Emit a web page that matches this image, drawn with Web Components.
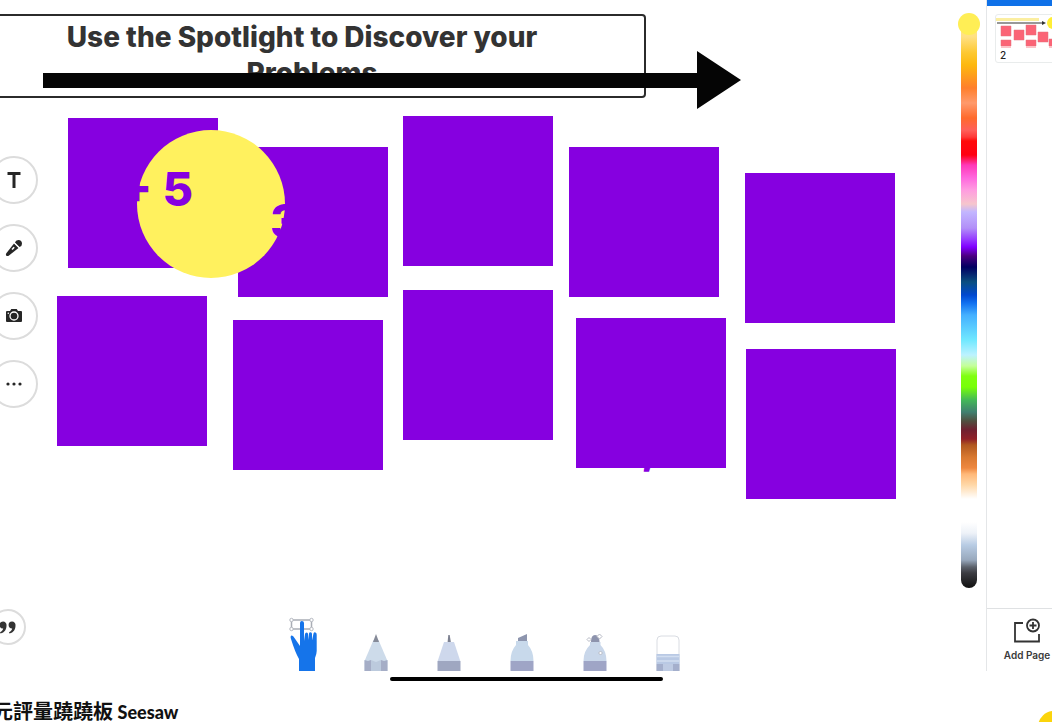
<!DOCTYPE html>
<html lang="zh-Hant">
<head>
<meta charset="utf-8">
<meta name="viewport" content="width=device-width, initial-scale=1">
<title>元評量蹺蹺板 Seesaw</title>
<style>
  html, body { margin: 0; height: 100%; }
  body { background: #fff; color: #222; font-family: Inter, "Noto Sans CJK TC", sans-serif; overflow: hidden; }
</style>
</head>
<body>
<seesaw-app></seesaw-app>
<script>
const define = (name, html, setup) => {
  const tpl = document.createElement('template');
  tpl.innerHTML = html;
  customElements.define(name, class extends HTMLElement {
    constructor() {
      super();
      this.attachShadow({ mode: 'open' }).append(tpl.content.cloneNode(true));
    }
    connectedCallback() { if (setup) setup(this, this.shadowRoot); }
  });
};

/* Round button of the left rail */
define('round-tool', `
<style>
  :host { display: block; }
  button { display: grid; place-items: center; box-sizing: border-box; width: var(--size, 48px); height: var(--size, 48px);
    padding: 0; border: 2px solid #dcdcdc; border-radius: 50%; background: #fff; color: #262626;
    font: 700 24px/24px Inter, sans-serif; }
</style>
<button type="button"><slot></slot></button>`,
(el, root) => root.querySelector('button').setAttribute('aria-label', el.getAttribute('label')));

define('tool-rail', `
<style>
  :host { display: flex; flex-direction: column; gap: 20px; margin-left: -10px; padding: 156px 0 26px; }
  .quote { --size: 36px; margin-top: auto; }
  svg { display: block; }
</style>
<round-tool label="Text"><svg width="16" height="18" viewBox="0 0 16 18"><path d="M1.500 1H14.500V4H9.500V17H6.500V4H1.500Z" fill="#262626"/></svg></round-tool>
<round-tool label="Record"><svg width="18" height="18" viewBox="0 0 18 18"><path d="M9 4.500 13.500 9 4 16.500Q2.500 17.600 1.300 16.700Q.4 15.500 1.500 14Z" fill="#262626"/><path d="M10 3.500Q10.500 1 13.300 1Q17 1.200 17 4.700Q17 7.500 14.500 8Z" fill="#262626"/><path d="M9.200 3.700 14.300 8.800" stroke="#fff" stroke-width="1"/><path d="M7 10.500 9.200 8.300" stroke="#fff" stroke-width="1.600"/></svg></round-tool>
<round-tool label="Photo"><svg width="18" height="16" viewBox="0 0 18 16"><path d="M2 3H5L6.300 1H11.700L13 3H16Q17 3 17 4V13Q17 14 16 14H2Q1 14 1 13V4Q1 3 2 3Z" fill="#262626"/><circle cx="9" cy="8" r="4" fill="none" stroke="#fff" stroke-width="1.300"/><circle cx="3.300" cy="5.200" r=".8" fill="#fff"/></svg></round-tool>
<round-tool label="More"><svg width="18" height="6" viewBox="0 0 18 6"><g fill="#262626"><circle cx="3" cy="3" r="1.600"/><circle cx="9" cy="3" r="1.600"/><circle cx="15" cy="3" r="1.600"/></g></svg></round-tool>
<round-tool class="quote" label="Caption"><svg width="18" height="13" viewBox="0 0 18 13"><g fill="#333"><path d="M4 .5A3.500 3.500 0 0 1 7.500 4.500C7.500 8.500 5.500 11.500 1.500 12.500L1 11.300C3 10.300 4 9 4.200 7.500A3.500 3.500 0 1 1 4 .5Z"/><path d="M13 .5A3.500 3.500 0 0 1 16.500 4.500C16.500 8.500 14.500 11.500 10.500 12.500L10 11.300C12 10.300 13 9 13.200 7.500A3.500 3.500 0 1 1 13 .5Z"/></g></svg></round-tool>`);

/* Free canvas: every object is placed by its own x and y */
define('canvas-item', `<style>:host { display: block; position: absolute; }</style><slot></slot>`,
(el) => {
  el.style.left = el.getAttribute('x') + 'px';
  el.style.top = el.getAttribute('y') + 'px';
});

define('drawing-canvas', `
<style>
  :host { display: block; position: absolute; inset: 0; overflow: hidden; }
  h1 { box-sizing: border-box; width: 688px; height: 84px; margin: 0; padding: 3px 80px; border: 2px solid #2b2b2b; border-radius: 4px;
    color: #333; text-align: center; font: 800 28px/36px Inter, sans-serif; overflow: hidden; }
  h1 span { padding-left: 20px; }
  .card { width: 150px; height: 150px; background: #8600e0; }
  .spot { width: 148px; height: 148px; border-radius: 50%; background: #fff15e; }
  .num { color: #8600e0; font: 800 47px/48px Inter, sans-serif; white-space: pre; }
  svg { display: block; }
</style>
<canvas-item x="-42" y="14"><h1>Use the Spotlight to Discover your <span>Problems</span></h1></canvas-item>
<canvas-item x="43" y="51"><svg width="700" height="60"><path d="M0 22H654V0L698 29 654 58V37H0Z" fill="#050505"/></svg></canvas-item>
<div id="cards"></div>
<canvas-item x="137" y="130"><div class="spot"></div></canvas-item>
<canvas-item x="120" y="165"><div class="num">+ 5</div></canvas-item>
<canvas-item x="270" y="197"><div class="num">3</div></canvas-item>
<canvas-item x="641" y="421"><div class="num">,</div></canvas-item>`,
(el, root) => {
  const places = [[68,118],[238,147],[403,116],[569,147],[745,173],[57,296],[233,320],[403,290],[576,318],[746,349]];
  root.querySelector('#cards').innerHTML = places
    .map(([x, y]) => `<canvas-item x="${x}" y="${y}"><div class="card"></div></canvas-item>`).join('');
});

/* Vertical colour picker */
define('colour-slider', `
<style>
  :host { display: flex; padding: 13px 6px 83px 0; }
  input { appearance: none; writing-mode: vertical-lr; width: 22px; height: 100%; margin: 0; background: none; }
  input::-webkit-slider-runnable-track { appearance: none; width: 16px; height: 100%; border-radius: 8px; background: var(--ramp); }
  input::-webkit-slider-thumb { appearance: none; width: 22px; height: 22px; margin-left: -3px; border-radius: 50%; background: #ffee55; }
</style>
<input type="range" min="0" max="100" value="0" aria-label="Colour">`,
(el, root) => {
  const stops = [[0,'transparent'],[10,'transparent'],[11,'#ffe88a'],[24,'#ffe082'],[40,'#fdc830'],[52,'#fdb80f'],[75,'#ff7f2c'],[90,'#ff9a6c'],[105,'#ff6a2c'],
    [117,'#ff605a'],[124,'#ff3a38'],[128,'#ff0a0a'],[142,'#ff0012'],[152,'#ff38b8'],[165,'#ff68de'],[177,'#ff9ce0'],[191,'#f6c6cc'],[199,'#c2b6ff'],
    [215,'#b28ff8'],[227,'#9436ff'],[234,'#8000ff'],[243,'#4c0080'],[254,'#020062'],[269,'#0a4f80'],[282,'#0048d0'],[290,'#1070f0'],
    [302,'#44b0ff'],[327,'#70e8ff'],[342,'#bcf2ff'],[353,'#c4ff98'],[363,'#80ff10'],[374,'#78ff08'],[387,'#44b858'],[399,'#408070'],[408,'#505040'],
    [417,'#702030'],[426,'#902028'],[432,'#b05820'],[444,'#d87830'],[455,'#ee8840'],[461,'#ffb878'],[472,'#ffd8a8'],[486,'#ffffff'],
    [509,'#ffffff'],[520,'#eef2f8'],[532,'#b8cce4'],[547,'#98a8bc'],[554,'#5c626c'],[560,'#3c3c42'],[575,'#101010']];
  el.style.setProperty('--ramp', 'linear-gradient(' + stops.map(([p, c]) => `${c} ${p / 5.75}%`).join(',') + ')');
});

define('pen-tray', `
<style>
  :host { display: flex; justify-content: center; align-items: flex-end; padding-right: 16px; }
  button { display: flex; justify-content: center; align-items: flex-end; width: 73px; height: 60px; padding: 0; border: 0; background: none; }
  svg { display: block; }
</style>
<button type="button" aria-label="Select"><svg width="30" height="54" viewBox="0 0 30 54">
  <rect x="3.500" y="3" width="20" height="9" fill="#fff" stroke="#a9adb5" stroke-width="1.500"/>
  <g fill="#fff" stroke="#b4b8c0"><circle cx="3.500" cy="3" r="1.700"/><circle cx="23.500" cy="3" r="1.700"/><circle cx="3.500" cy="12" r="1.700"/><circle cx="23.500" cy="12" r="1.700"/></g>
  <path d="M12 6Q12 4 13.800 4Q16 4 16 6V24L17 17Q17.200 15.500 18.700 15.500Q20 15.500 20 17V23L21 16.500Q21.300 15 22.600 15.200Q24 15.400 24 17V23.500L25.500 16.500Q26 15 27.500 15.400Q29 16 28.700 18V34Q28.700 37 27 41V54H11V42Q7 35 3 22Q2 19 3.500 18.500Q5 18 6.500 21L12 29Z" fill="#1574ea"/></svg></button>
<button type="button" aria-label="Pencil"><svg width="24" height="37" viewBox="0 0 24 37"><path d="M.5 27 9.500 6H14.500L23.500 27V37H.5Z" fill="#cddbea"/><path d="M12 0 9 8H15Z" fill="#858a98"/><path d="M.5 26 4 27 7 26V37H.5Z" fill="#a5adc6"/><path d="M17 26 20 27 23.500 26V37H17Z" fill="#a5adc6"/><path d="M7 26 12 28 17 26V37H7Z" fill="#bccadd"/></svg></button>
<button type="button" aria-label="Pen"><svg width="24" height="37" viewBox="0 0 24 37"><path d="M10.500 9 11.300 1H12.700L14 9Z" fill="#7c8090"/><path d="M7 8H17L23.300 27H.7Z" fill="#ced8ec"/><path d="M.5 27H23.500V37H.5Z" fill="#9fa7c1"/></svg></button>
<button type="button" aria-label="Marker"><svg width="24" height="37" viewBox="0 0 24 37"><path d="M8 7V4L17 0V7Z" fill="#8d95ae"/><path d="M6 7H18V11Q23.500 17 23.500 27H.5Q.5 17 6 11Z" fill="#c8d9eb"/><path d="M.5 27H23.500V37H.5Z" fill="#9fa5c6"/></svg></button>
<button type="button" aria-label="Glow pen"><svg width="24" height="38" viewBox="0 0 24 38"><path d="M8 9Q8 2 12 2Q16.500 2 16.500 9Z" fill="#8d93ad"/><path d="M7 9H17.500V12Q23.500 18 23.500 28H.5Q.5 18 7 12Z" fill="#c9d7ea"/><path d="M.5 28H23.500V38H.5Z" fill="#9fa5c6"/><g fill="#fff" stroke="#b6b9c4"><path d="M16.500 1 19 3.500 16.500 6 14 3.500Z"/><path d="M6 4.500 8 6.500 6 8.500 4 6.500Z"/><path d="M17.500 18 19.500 20 17.500 22 15.500 20Z"/></g></svg></button>
<button type="button" aria-label="Eraser"><svg width="24" height="37" viewBox="0 0 24 37"><path d="M1 37V6Q1 2 5 2H19Q23 2 23 6V37Z" fill="#fff" stroke="#d9dce2"/><path d="M.5 20H23.500V30H.5Z" fill="#b9c9e4"/><path d="M.5 22.500H23.500M.5 27H23.500" stroke="#d2def0" stroke-width="1.500"/><path d="M.5 30H23.500V37H.5Z" fill="#a4afcc"/><path d="M7 30H17V37H7Z" fill="#becbe3"/></svg></button>`);

define('work-space', `
<style>
  :host { position: relative; display: grid; grid-template: minmax(0, 1fr) 60px / auto minmax(0, 1fr) auto; min-width: 0; }
  tool-rail { grid-area: 1 / 1 / 3 / 2; z-index: 1; }
  colour-slider { grid-area: 1 / 3 / 3 / 4; z-index: 1; }
  pen-tray { grid-area: 2 / 1 / 3 / 4; }
</style>
<drawing-canvas></drawing-canvas>
<pen-tray></pen-tray>
<tool-rail></tool-rail>
<colour-slider></colour-slider>`);

/* Page list on the right, partly out of the window */
define('page-panel', `
<style>
  :host { display: flex; flex-direction: column; box-sizing: border-box; width: 66px; overflow: hidden; border-left: 1px solid #e4e6e8; }
  .bar { flex: none; height: 6px; background: #0f71e8; }
  .page { flex: none; width: 96px; margin: 8px 0 0 8px; padding: 0; box-sizing: border-box; border: 1px solid #e9ecec; border-radius: 3px; background: #fff; text-align: left; color: #222; font: 500 10px/14px Inter, sans-serif; }
  .page span { display: block; padding: 0 4px; }
  .add { display: flex; flex-direction: column; align-items: center; gap: 4px; width: 80px; height: 63px; margin-top: auto; padding: 9px 0 0; border: 0; border-top: 1px solid #dfe1e3; background: #fff; color: #3a3a3a; font: 600 10px/14px Inter, sans-serif; }
  svg { display: block; }
</style>
<div class="bar"></div>
<button class="page" type="button"><svg width="94" height="33" viewBox="0 0 94 33">
  <path d="M0 3H43V6H0Z" fill="#fbeea0"/><path d="M1 7.500H46V6L50 8 46 10V8.500H1Z" fill="#333"/><circle cx="57" cy="8" r="6" fill="#ffee35"/>
  <g fill="#fb6476" stroke="#e0707c" stroke-width=".5"><path d="M5 11H15V21H5ZM18 15H28V25H18ZM30 10H40V20H30ZM42 17H52V27H42ZM5 25H15V31H5ZM30 25H40V31H30ZM53 24H63V31H53Z"/></g>
  <path d="M5 31H15V33H5ZM30 31H40V33H30ZM53 31H63V33H53Z" fill="#fcc3c8"/></svg><span>2</span></button>
<button class="add" type="button"><svg width="28" height="26" viewBox="0 0 28 26" fill="none" stroke="#333" stroke-width="1.800"><path d="M10 5H2V23.500H26V16"/><circle cx="20" cy="7.500" r="6"/><path d="M20 4V11M16.500 7.500H23.500"/></svg><slot></slot></button>`);

define('seesaw-app', `
<style>
  :host { position: relative; display: grid; grid-template: minmax(0, 1fr) 51px / minmax(0, 1fr) auto; height: 100vh; overflow: hidden; }
  footer { grid-column: 1 / 3; display: flex; flex-direction: column; align-items: center; gap: 20px; padding-top: 6px; }
  .home { flex: none; width: 273px; height: 4px; border-radius: 2px; background: #000; }
  p { align-self: flex-start; margin: 0 0 0 -7px; color: #111; white-space: nowrap; font: 700 20px/20px "Noto Sans CJK TC", sans-serif; }
  p span { font: 900 18px/20px Lato, sans-serif; }
  .badge { position: absolute; right: -18px; bottom: -21px; width: 32px; height: 32px; border-radius: 50%; background: #fbd40c; }
</style>
<work-space></work-space>
<page-panel>Add Page</page-panel>
<footer><div class="home"></div><p>元評量蹺蹺板 <span>Seesaw</span></p></footer>
<div class="badge"></div>`);
</script>
</body>
</html>
